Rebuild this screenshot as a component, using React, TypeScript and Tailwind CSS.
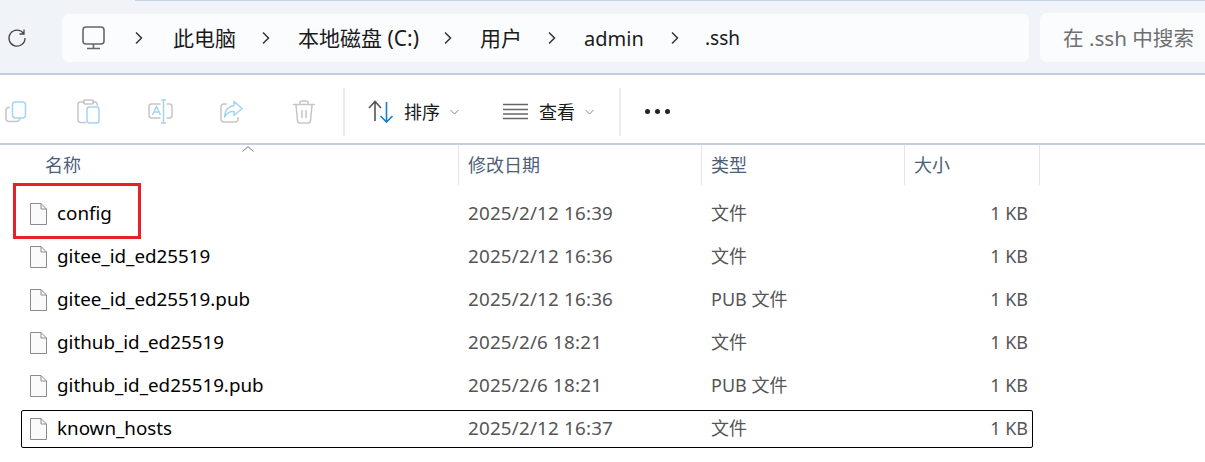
const files = [
  { name: "config", date: "2025/2/12 16:39", type: "文件" },
  { name: "gitee_id_ed25519", date: "2025/2/12 16:36", type: "文件" },
  { name: "gitee_id_ed25519.pub", date: "2025/2/12 16:36", type: "PUB 文件" },
  { name: "github_id_ed25519", date: "2025/2/6 18:21", type: "文件" },
  { name: "github_id_ed25519.pub", date: "2025/2/6 18:21", type: "PUB 文件" },
  { name: "known_hosts", date: "2025/2/12 16:37", type: "文件", selected: true },
];

const crumbs = [
  { label: "此电脑", className: "ml-[30px] w-[89px]" },
  { label: "本地磁盘 (C:)", className: "ml-[28px] w-[146px]" },
  { label: "用户", className: "ml-[28px] w-[68px]" },
  { label: "admin", className: "ml-[28px] w-[87px] text-[20px]" },
];

function Chevron() {
  return (
    <svg width="8" height="14" viewBox="0 0 8 14" fill="none" stroke="#333" strokeWidth="1.5">
      <path d="M1 1.5 6.5 7 1 12.5" />
    </svg>
  );
}

function SmallCaret() {
  return (
    <svg width="9" height="6" viewBox="0 0 9 6" fill="none" stroke="#8a8a8a" strokeWidth="1">
      <path d="M.5 1 4.5 5 8.5 1" />
    </svg>
  );
}

function FileIcon() {
  return (
    <svg width="17" height="22" viewBox="0 0 17 22" className="shrink-0">
      <path d="M.5.5H11L16.5 6V21.5H.5Z" fill="#fafafa" stroke="#8c8c8c" />
      <path d="M11 .5V6H16.5" fill="none" stroke="#8c8c8c" />
    </svg>
  );
}

function ToolIcons() {
  const grey = "#c6c6c6";
  const blue = "#a5d3f5";
  return (
    <div className="flex items-center">
      <svg width="22" height="22" viewBox="0 0 22 22" fill="none" strokeWidth="1.5" className="ml-[5px]">
        <path d="M5 6.5H4Q1 6.5 1 9.5V17.5Q1 20.5 4 20.5H11Q14.5 20.5 15 17.5" stroke={grey} />
        <rect x="7.5" y="1" width="13" height="16" rx="3" stroke={blue} />
      </svg>
      <svg width="23" height="25" viewBox="0 0 23 25" fill="none" strokeWidth="1.5" className="ml-[50px]">
        <path d="M8 3H3.5Q1 3 1 5.5V21Q1 23.5 3.5 23.5H9M15 3H18Q20 3 20.5 6V7" stroke={grey} />
        <rect x="6.5" y="1" width="10" height="4" rx="1.5" stroke={grey} />
        <rect x="10" y="8" width="12" height="16" rx="2.5" stroke={blue} />
      </svg>
      <svg width="25" height="25" viewBox="0 0 25 25" fill="none" strokeWidth="1.5" className="ml-[48px]">
        <path d="M12.5 5H3.5Q1 5 1 7.5V16.5Q1 19 3.5 19H12.5M18.5 5H21.5Q24 5 24 7.5V16.5Q24 19 21.5 19H18.5" stroke={grey} />
        <path d="M13 1H18M15.5 1V24M13 24H18" stroke={blue} />
        <path d="M4.5 16 8.5 7.5 12.5 16M5.8 13H11.2" stroke={blue} />
      </svg>
      <svg width="23" height="23" viewBox="0 0 23 23" fill="none" strokeWidth="1.5" className="ml-[47px]">
        <path d="M7 4H4Q1 4 1 7V19Q1 22 4 22H15Q18 22 18 19V17" stroke={grey} />
        <path d="M14 1.5 22 8.5 14 15.5V11.5Q8 11 4.5 17Q5 7 14 5.5Z" stroke={blue} strokeLinejoin="round" />
      </svg>
      <svg width="22" height="24" viewBox="0 0 22 24" fill="none" stroke={grey} strokeWidth="1.5" className="ml-[50px] mr-[1px]">
        <path d="M0 4.5H22M7 4V3Q7 1 9 1H13Q15 1 15 3V4M3 5 4.5 20.5Q4.7 23 7 23H15Q17.3 23 17.5 20.5L19 5M9 10V18M13 10V18" />
      </svg>
    </div>
  );
}

export default function App() {
  return (
    <div
      className="h-[462px] w-[1205px] overflow-hidden bg-white relative text-[#1a1a1a]"
      style={{ fontFamily: '"Noto Sans", "Noto Sans CJK SC", sans-serif' }}
    >
      {/* address bar */}
      <div className="h-[75px] bg-[#f0f4f9] border-b-2 border-[#c2cedb] relative">
        <div className="h-px ml-[135px] bg-[#c3d4e6]" />
        <div className="flex items-center pt-[12px]">
          <svg width="20" height="20" viewBox="0 0 20 20" fill="none" stroke="#444" strokeWidth="1.3" className="ml-[7px] shrink-0">
            <path d="M16.5 5.5A8 8 0 1 0 18 10M17 1.5V6H12.5" />
          </svg>
          <div className="ml-[35px] w-[967px] h-[48px] rounded-[7px] bg-[#fbfcfe] flex items-center text-[21px] leading-none">
            <svg width="24" height="24" viewBox="0 0 24 24" fill="none" stroke="#666" strokeWidth="1.6" className="ml-[20px] shrink-0">
              <rect x="1" y="1" width="21" height="17" rx="3" />
              <path d="M11.5 18V22M5 22.5H18" />
            </svg>
            <div className="ml-[29px] flex items-center">
              <Chevron />
            </div>
            {crumbs.map((c) => (
              <div key={c.label} className="flex items-center">
                <span className={`whitespace-nowrap pt-[2px] ${c.className}`}>{c.label}</span>
                <Chevron />
              </div>
            ))}
            <span className="ml-[26px] pt-[2px] text-[19px]">.ssh</span>
          </div>
          <div className="ml-[11px] h-[49px] flex-1 rounded-l-[7px] bg-[#fbfcfe] flex items-center pl-[23px] pt-[2px] text-[20.6px] text-[#6f6f6f] whitespace-nowrap">
            在 .ssh 中搜索
          </div>
        </div>
      </div>

      {/* command bar */}
      <div className="h-[70px] border-b-2 border-[#c2cedb] flex items-center pt-[5px]">
        <ToolIcons />
        <div className="ml-[27px] h-[48px] w-[2px] bg-[#ececec]" />
        <svg width="26" height="24" viewBox="0 0 26 24" fill="none" strokeWidth="1.6" className="ml-[23px]">
          <path d="M1 8 7 1.5 13 8M7 2V21" stroke="#555" />
          <path d="M12.5 16 18.5 22 24.5 16M18.5 21V2" stroke="#1a7fd4" />
        </svg>
        <span className="ml-[10px] text-[18px] leading-none">排序</span>
        <span className="ml-[10px] flex"><SmallCaret /></span>
        <svg width="25" height="17" viewBox="0 0 25 17" fill="none" strokeWidth="1.4" stroke="#666" className="ml-[44px]">
          <path d="M0 1.5H25M0 6.5H25M0 11H25M0 15.5H25" />
        </svg>
        <span className="ml-[11px] text-[18px] leading-none">查看</span>
        <span className="ml-[10px] flex"><SmallCaret /></span>
        <div className="ml-[25px] h-[48px] w-[2px] bg-[#ececec]" />
        <div className="ml-[24px] flex gap-[5px]">
          <span className="size-[5px] rounded-full bg-[#222]" />
          <span className="size-[5px] rounded-full bg-[#222]" />
          <span className="size-[5px] rounded-full bg-[#222]" />
        </div>
      </div>

      {/* column headers */}
      <div className="h-[40px] flex text-[18px] text-[#4c607a] leading-[41px] relative">
        <div className="w-[459px] pl-[45px] border-r border-[#e3e5e8]">名称</div>
        <div className="w-[243px] pl-[9px] border-r border-[#e3e5e8]">修改日期</div>
        <div className="w-[203px] pl-[9px] border-r border-[#e3e5e8]">类型</div>
        <div className="w-[135px] pl-[9px] border-r border-[#e3e5e8]">大小</div>
        <svg width="12" height="6" viewBox="0 0 12 6" fill="none" stroke="#777" className="absolute left-[242px] top-[1px]">
          <path d="M.5 5.5 6 .7 11.5 5.5" />
        </svg>
      </div>

      {/* file list */}
      <div className="pt-[7px] text-[18.8px]">
        {files.map((f) => (
          <div key={f.name} className="h-[43px] flex items-center">
            <div
              className={`ml-[21px] w-[1012px] h-[38px] flex items-center border rounded-[2px] ${
                f.selected ? "border-black" : "border-transparent"
              }`}
            >
              <div className="w-[446px] pl-2 flex items-center gap-[10px] text-black whitespace-nowrap">
                <FileIcon />
                <span>{f.name}</span>
              </div>
              <div className="w-[243px] text-[#555] whitespace-nowrap tracking-[0.2px]">{f.date}</div>
              <div className="w-[206px] text-[#555] text-[18px] whitespace-nowrap">{f.type}</div>
              <div className="w-[111px] text-right text-[18px] text-[#555]">1 KB</div>
            </div>
          </div>
        ))}
      </div>

      {/* annotation box */}
      <div className="absolute left-[13px] top-[183px] w-[128px] h-[56px] border-[3px] border-[#e8202a]" />
    </div>
  );
}
